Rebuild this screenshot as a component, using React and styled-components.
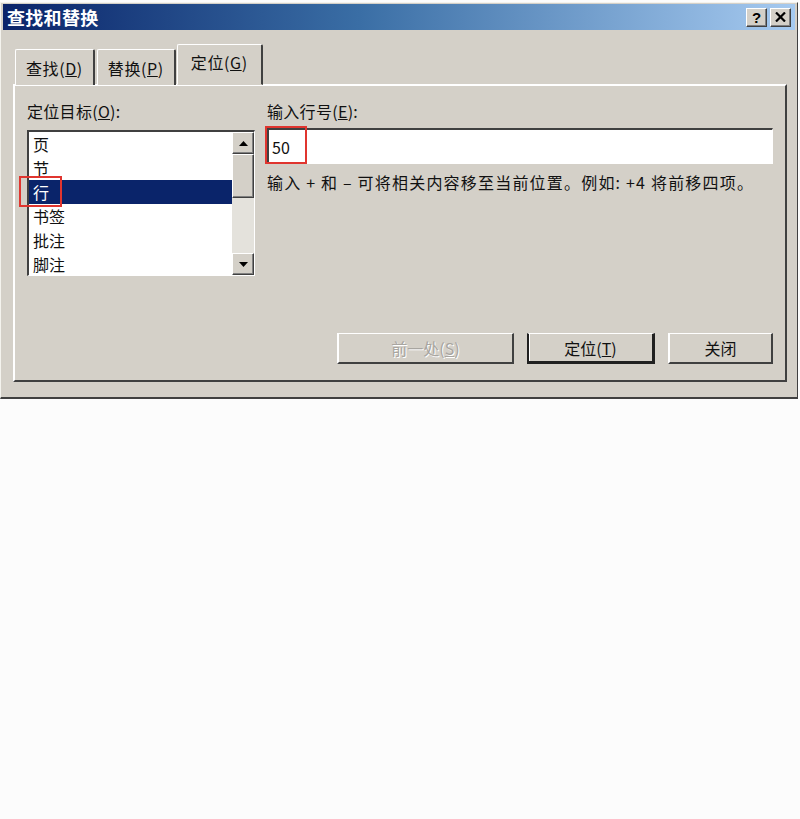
import React, { useState } from 'react';
import styled, { createGlobalStyle, css } from 'styled-components';

const GlobalStyle = createGlobalStyle`
  html, body {
    margin: 0;
    padding: 0;
    background: #fcfcfc;
  }
  body {
    font-family: "Noto Sans CJK SC", "Liberation Sans", sans-serif;
    font-size: 16px;
    color: #111;
  }
`;

const items = ['页', '节', '行', '书签', '批注', '脚注'];

function App() {
  //state
  const [selected, setSelected] = useState(2);
  const [line, setLine] = useState('50');

  return (
    <>
      <GlobalStyle />
      <Page>
        <Dialog>
          <TitleBar>
            <Title>查找和替换</Title>
            <TitleButtons>
              <CaptionButton>?</CaptionButton>
              <CaptionButton>
                <svg width="11" height="10" viewBox="0 0 11 10">
                  <path d="M1 0.5 L10 9.5 M10 0.5 L1 9.5" stroke="#000" strokeWidth="2.2" />
                </svg>
              </CaptionButton>
            </TitleButtons>
          </TitleBar>

          <Body>
            <Tabs>
              <Tab>查找(<u>D</u>)</Tab>
              <Tab>替换(<u>P</u>)</Tab>
              <Tab active>定位(<u>G</u>)</Tab>
            </Tabs>

            <Panel>
              <Columns>
                <LeftCol>
                  <Label>定位目标(<u>O</u>):</Label>
                  <ListBox>
                    <ListItems>
                      {items.map((item, i) => (
                        <ListItem
                          key={item}
                          selected={i === selected}
                          onClick={() => setSelected(i)}
                        >
                          {item}
                        </ListItem>
                      ))}
                    </ListItems>
                    <ScrollBar>
                      <ScrollButton>
                        <svg width="9" height="5" viewBox="0 0 9 5">
                          <path d="M0 5 L4.5 0 L9 5 Z" fill="#000" />
                        </svg>
                      </ScrollButton>
                      <Thumb />
                      <Track />
                      <ScrollButton>
                        <svg width="9" height="5" viewBox="0 0 9 5">
                          <path d="M0 0 L9 0 L4.5 5 Z" fill="#000" />
                        </svg>
                      </ScrollButton>
                    </ScrollBar>
                    <Marker style={{ left: -10, top: 44, width: 43, height: 31 }} />
                  </ListBox>
                </LeftCol>

                <RightCol>
                  <Label>输入行号(<u>E</u>):</Label>
                  <InputWrap>
                    <LineInput value={line} onChange={(e) => setLine(e.target.value)} />
                    <Marker style={{ left: -2, top: -2, width: 42, height: 38 }} />
                  </InputWrap>
                  <Hint>输入 + 和 – 可将相关内容移至当前位置。例如: +4 将前移四项。</Hint>
                </RightCol>
              </Columns>

              <ButtonRow>
                <Button disabled width={177}>前一处(<u>S</u>)</Button>
                <Button primary width={128}>定位(<u>T</u>)</Button>
                <Button width={105}>关闭</Button>
              </ButtonRow>
            </Panel>
          </Body>
        </Dialog>
      </Page>
    </>
  );
}

export default App;

//Styled Component
const Page = styled.div`
  padding-top: 2px;
  width: 800px;
`;

const Dialog = styled.div`
  width: 798px;
  background: #d4d0c8;
  border-top: 1px solid #f4f3ee;
  border-left: 1px solid #f4f3ee;
  border-right: 1px solid #404040;
  border-bottom: 2px solid #404040;
  box-sizing: border-box;
  padding: 1px 2px 2px 2px;
  height: 397px;
  display: flex;
  flex-direction: column;
`;

const TitleBar = styled.div`
  height: 26px;
  background: linear-gradient(to right, #0a246a 0%, #3a6ea5 45%, #a6caf0 100%);
  display: flex;
  align-items: center;
  justify-content: space-between;
  padding: 0 4px 0 4px;
`;

const Title = styled.div`
  color: #fff;
  font-weight: bold;
  font-size: 18px;
  letter-spacing: 0.3px;
`;

const TitleButtons = styled.div`
  display: flex;
  gap: 3px;
`;

const CaptionButton = styled.div`
  width: 21px;
  height: 19px;
  box-sizing: border-box;
  background: #d4d0c8;
  border-top: 1px solid #fff;
  border-left: 1px solid #fff;
  border-right: 1px solid #404040;
  border-bottom: 1px solid #404040;
  box-shadow: inset -1px -1px 0 #808080;
  display: flex;
  align-items: center;
  justify-content: center;
  font-family: "Liberation Sans", sans-serif;
  font-weight: bold;
  font-size: 15px;
  color: #000;
`;

const Body = styled.div`
  flex: 1;
  padding: 14px 8px 13px 10px;
  display: flex;
  flex-direction: column;
`;

const Tabs = styled.div`
  display: flex;
  align-items: flex-end;
  padding-left: 2px;
  height: 41px;
  margin-bottom: -1px;
  position: relative;
  z-index: 1;
`;

const Tab = styled.div`
  height: 36px;
  box-sizing: border-box;
  padding: 0 10px;
  display: flex;
  align-items: center;
  margin-right: 2px;
  letter-spacing: 0.6px;
  border-top: 1px solid #fff;
  border-left: 1px solid #fff;
  border-right: 2px solid #404040;
  border-radius: 2px 2px 0 0;
  background: #d4d0c8;
  ${(p) =>
    p.active &&
    css`
      height: 41px;
      margin-left: -1px;
      padding: 0 13px 5px;
      border-bottom: 1px solid #d4d0c8;
    `}
`;

const Panel = styled.div`
  flex: 1;
  border-top: 2px solid #fff;
  border-left: 2px solid #fff;
  border-right: 2px solid #404040;
  border-bottom: 2px solid #404040;
  padding: 14px 12px 16px 12px;
  display: flex;
  flex-direction: column;
  justify-content: space-between;
`;

const Columns = styled.div`
  display: flex;
  gap: 12px;
`;

const LeftCol = styled.div`
  width: 228px;
  display: flex;
  flex-direction: column;
`;

const RightCol = styled.div`
  flex: 1;
  display: flex;
  flex-direction: column;
`;

const Label = styled.div`
  height: 22px;
  line-height: 22px;
  margin-bottom: 8px;
  letter-spacing: 0.3px;
`;

const ListBox = styled.div`
  position: relative;
  height: 146px;
  box-sizing: border-box;
  background: #fff;
  border-top: 2px solid #404040;
  border-left: 2px solid #404040;
  border-right: 1px solid #fff;
  border-bottom: 1px solid #fff;
  box-shadow: 0 0 0 1px #d4d0c8;
  display: flex;
`;

const ListItems = styled.div`
  flex: 1;
`;

const ListItem = styled.div`
  height: 24px;
  line-height: 24px;
  padding-left: 4px;
  font-size: 16px;
  cursor: default;
  ${(p) =>
    p.selected &&
    css`
      background: #0a246a;
      color: #fff;
    `}
`;

const ScrollBar = styled.div`
  width: 22px;
  display: flex;
  flex-direction: column;
  background: #e4e2dc;
`;

const raised = css`
  box-sizing: border-box;
  background: #d4d0c8;
  border-top: 1px solid #fff;
  border-left: 1px solid #fff;
  border-right: 1px solid #404040;
  border-bottom: 1px solid #404040;
  box-shadow: inset -1px -1px 0 #808080;
`;

const ScrollButton = styled.div`
  ${raised}
  height: 22px;
  display: flex;
  align-items: center;
  justify-content: center;
`;

const Thumb = styled.div`
  ${raised}
  height: 44px;
`;

const Track = styled.div`
  flex: 1;
`;

const Marker = styled.div`
  position: absolute;
  border: 2px solid #e0352f;
  box-sizing: border-box;
  pointer-events: none;
`;

const InputWrap = styled.div`
  position: relative;
  margin-top: -2px;
`;

const LineInput = styled.input`
  display: block;
  width: 100%;
  height: 36px;
  box-sizing: border-box;
  border-top: 2px solid #404040;
  border-left: 2px solid #404040;
  border-right: 1px solid #fff;
  border-bottom: 1px solid #fff;
  background: #fff;
  font-family: "Noto Sans CJK SC", "Liberation Sans", sans-serif;
  font-size: 16px;
  padding: 0 3px;
  outline: none;
  color: #111;
`;

const Hint = styled.div`
  margin-top: 6px;
  font-size: 16px;
  letter-spacing: 1.2px;
  white-space: nowrap;
`;

const ButtonRow = styled.div`
  display: flex;
  justify-content: flex-end;
  gap: 13px;
`;

const Button = styled.button`
  width: ${(p) => p.width}px;
  height: 31px;
  font-family: "Noto Sans CJK SC", "Liberation Sans", sans-serif;
  font-size: 16px;
  color: #111;
  background: #d4d0c8;
  border-top: 1px solid #fff;
  border-left: 2px solid #fff;
  border-right: 2px solid #404040;
  border-bottom: 2px solid #404040;
  padding: 0;
  ${(p) =>
    p.primary &&
    css`
      border-left: 2px solid #202020;
      border-right: 3px solid #202020;
      border-bottom: 3px solid #202020;
      box-shadow: inset 1px 0 0 #fff;
    `}
  &:disabled {
    color: #a8a5a0;
    text-shadow: 1px 1px 0 #fff;
  }
`;
